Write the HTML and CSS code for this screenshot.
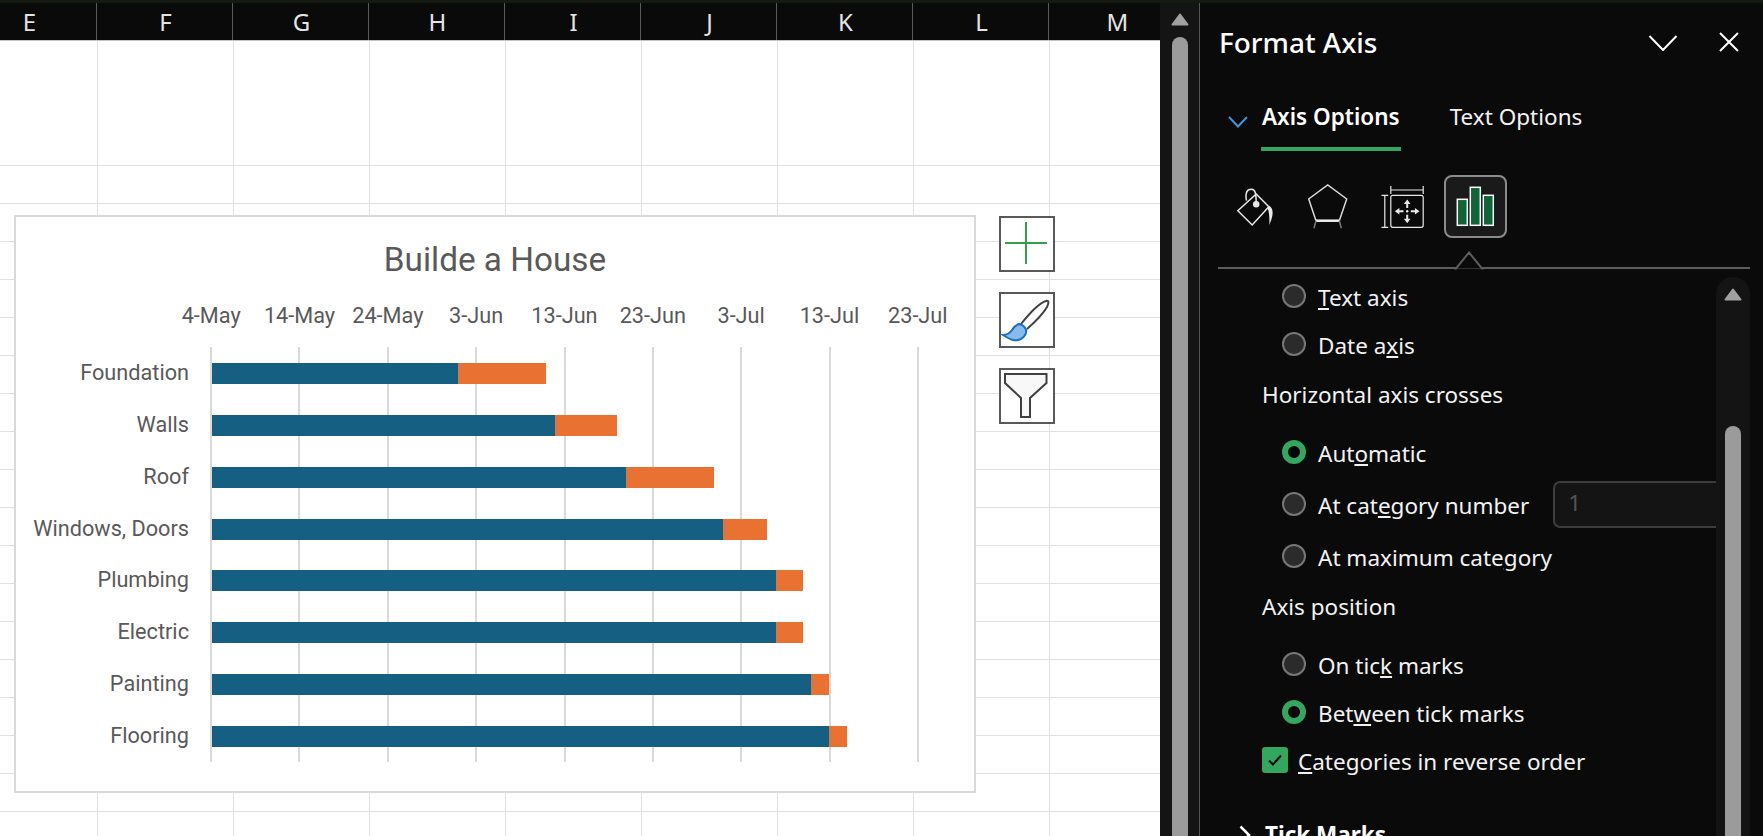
FILE: index.html
```html
<!DOCTYPE html>
<html lang="en">
  <head>
    <meta charset="utf-8" />
    <title>Format Axis</title>
    <link rel="stylesheet" href="styles.css">
  </head>

  <body>
    <div class="top-strip"></div>

    <div class="app">
      <div class="sheet">
        <div class="col-header">
          <div class="col first-col">E</div>
          <div class="col">F</div>
          <div class="col">G</div>
          <div class="col">H</div>
          <div class="col">I</div>
          <div class="col">J</div>
          <div class="col">K</div>
          <div class="col">L</div>
          <div class="col">M</div>
        </div>

        <div class="cells">
          <div class="row tall-row"></div>
          <div class="row"></div><div class="row"></div><div class="row"></div><div class="row"></div>
          <div class="row"></div><div class="row"></div><div class="row"></div><div class="row"></div>
          <div class="row"></div><div class="row"></div><div class="row"></div><div class="row"></div>
          <div class="row"></div><div class="row"></div><div class="row"></div><div class="row"></div>
          <div class="row"></div>

          <div class="chart">
            <div class="chart-title">Builde a House</div>
            <div class="chart-axis">
              <span>4-May</span><span>14-May</span><span>24-May</span><span>3-Jun</span><span>13-Jun</span>
              <span>23-Jun</span><span>3-Jul</span><span>13-Jul</span><span>23-Jul</span>
            </div>
            <div class="plot">
              <div class="gridlines">
                <i></i><i></i><i></i><i></i><i></i><i></i><i></i><i></i><i></i>
              </div>
              <div class="task"><label>Foundation</label><span class="bar-start" style="width: 246px"></span><span class="bar-days" style="width: 88px"></span></div>
              <div class="task"><label>Walls</label><span class="bar-start" style="width: 343px"></span><span class="bar-days" style="width: 62px"></span></div>
              <div class="task"><label>Roof</label><span class="bar-start" style="width: 414px"></span><span class="bar-days" style="width: 88px"></span></div>
              <div class="task"><label>Windows, Doors</label><span class="bar-start" style="width: 511px"></span><span class="bar-days" style="width: 44px"></span></div>
              <div class="task"><label>Plumbing</label><span class="bar-start" style="width: 564px"></span><span class="bar-days" style="width: 27px"></span></div>
              <div class="task"><label>Electric</label><span class="bar-start" style="width: 564px"></span><span class="bar-days" style="width: 27px"></span></div>
              <div class="task"><label>Painting</label><span class="bar-start" style="width: 599px"></span><span class="bar-days" style="width: 18px"></span></div>
              <div class="task"><label>Flooring</label><span class="bar-start" style="width: 617px"></span><span class="bar-days" style="width: 18px"></span></div>
            </div>
          </div>

          <div class="chart-tools">
            <div class="chart-tool">
              <svg width="52" height="52" viewBox="0 0 52 52">
                <path d="M25 4V46M4 25H46" stroke="#339f50" stroke-width="2" fill="none" />
              </svg>
            </div>
            <div class="chart-tool">
              <svg width="52" height="52" viewBox="2 2 52 52">
                <path d="M22 32C30 22 40 11 47 9C50 8 50 11 48 15C44 22 36 30 28 37" fill="#fff" stroke="#404040" stroke-width="2" />
                <path d="M20 32C25 33 28 37 27 41C25 47 19 49 14 48C10 47 7 45 4 43C8 43 11 41 13 38C15 35 17 33 20 32Z" fill="#86bbec" stroke="#1b6ec2" stroke-width="2" />
              </svg>
            </div>
            <div class="chart-tool">
              <svg width="52" height="52" viewBox="2 2 52 52">
                <path d="M6 6H47.5V15L31 30V49H22V30L6 15Z" fill="#f8f8f8" stroke="#404040" stroke-width="2" />
              </svg>
            </div>
          </div>
        </div>
      </div>

      <div class="sheet-scroll">
        <svg class="scroll-up" width="18" height="13" viewBox="0 0 18 13">
          <path d="M9 1.500L16.500 11.500H1.500Z" fill="#a0a0a0" stroke="#a0a0a0" stroke-width="2" stroke-linejoin="round" />
        </svg>
        <div class="scroll-thumb"></div>
      </div>

      <div class="panel">
        <div class="panel-head">
          <h1>Format Axis</h1>
          <svg class="head-chevron" width="30" height="16" viewBox="0 0 30 16">
            <path d="M1.500 1L15 15L28.500 1" stroke="#fff" stroke-width="2" fill="none" />
          </svg>
          <svg class="head-close" width="22" height="22" viewBox="0 0 22 22">
            <path d="M2 2L20 20M20 2L2 20" stroke="#fff" stroke-width="2" fill="none" />
          </svg>
        </div>

        <div class="tabs">
          <svg class="tab-chevron" width="20" height="12" viewBox="0 0 20 12">
            <path d="M1 1L10 10.500L19 1" stroke="#3a96dd" stroke-width="2" fill="none" />
          </svg>
          <div class="tab tab-active">Axis Options</div>
          <div class="tab">Text Options</div>
        </div>

        <div class="icon-tabs">
          <div class="icon-tab">
            <svg width="63" height="63" viewBox="0 0 63 63" fill="none" stroke="#e8e8e8" stroke-width="1.500">
              <path d="M13.800 35.700L28.200 50L44.800 31.700L32.200 19Z" />
              <path d="M22.500 25.700C21 18 23 14.300 27.200 14.300C31 14.300 32.200 17 32.200 29.300" />
              <circle cx="32.200" cy="29.300" r="2.500" fill="#e8e8e8" />
              <path d="M44.800 30.500C49 33 50.500 38 45.300 50C45.500 43 45.500 38 43.500 33Z" fill="#e8e8e8" stroke="none" />
            </svg>
          </div>
          <div class="icon-tab">
            <svg width="63" height="63" viewBox="0 0 63 63" fill="none" stroke="#d8d8d8" stroke-width="1.500">
              <path d="M19 45.700L11.700 24L30.700 10L49.700 24L42.300 45.700" />
              <path d="M19 45.700H42.300" stroke="#f0f0f0" stroke-width="2.500" />
              <path d="M19 45.700L17 53.300M42.300 45.700L44.300 53.300" stroke="#777" />
            </svg>
          </div>
          <div class="icon-tab">
            <svg width="63" height="63" viewBox="0 0 63 63" fill="none" stroke="#e8e8e8" stroke-width="1.200">
              <rect x="19.800" y="20.300" width="32.400" height="32" rx="2" />
              <path d="M19.800 11V19M52.200 11V19M19.800 15H52.200" />
              <path d="M13.800 20.300V52.300M10.500 20.300H17.200M10.500 52.300H17.200" />
              <path d="M36.200 24.500L39.500 29H37.200V33H35.200V29H32.900ZM36.200 48.300L39.500 43.700H37.200V39.700H35.200V43.700H32.900ZM23.800 36.300L28.400 33V35.300H32.500V37.300H28.400V39.600ZM48.500 36.300L43.900 33V35.300H39.800V37.300H43.900V39.600Z" fill="#e8e8e8" stroke="none" />
              <circle cx="36.200" cy="36.300" r="1.200" fill="#e8e8e8" stroke="none" />
            </svg>
          </div>
          <div class="icon-tab icon-tab-active">
            <svg width="59" height="59" viewBox="2 2 59 59" fill="#0e6537" stroke="#fff" stroke-width="1.500">
              <rect x="13.300" y="24.300" width="10" height="26" />
              <rect x="26.300" y="12.300" width="10" height="38" />
              <rect x="39.300" y="20.300" width="10" height="30" />
            </svg>
          </div>
        </div>

        <div class="divider">
          <svg class="divider-notch" width="30" height="19" viewBox="0 0 30 19">
            <path d="M0 17.500H2L15 1.500L28 17.500H30" stroke="#5c5c5c" stroke-width="2" fill="#0a0a0a" />
          </svg>
        </div>

        <div class="panel-body">
          <div class="options">
            <div class="option"><span class="radio"></span><span><u>T</u>ext axis</span></div>
            <div class="option"><span class="radio"></span><span>Date a<u>x</u>is</span></div>
            <div class="section-label first-label">Horizontal axis crosses</div>
            <div class="option option-wide first-wide"><span class="radio radio-on"></span><span>Aut<u>o</u>matic</span></div>
            <div class="option option-wide">
              <span class="radio"></span><span>At cat<u>e</u>gory number</span>
              <div class="number-input">1</div>
            </div>
            <div class="option option-wide"><span class="radio"></span><span>At maximum cate<u>g</u>ory</span></div>
            <div class="section-label second-label">Axis position</div>
            <div class="option first-tick"><span class="radio"></span><span>On tic<u>k</u> marks</span></div>
            <div class="option"><span class="radio radio-on"></span><span>Bet<u>w</u>een tick marks</span></div>
            <div class="check-row">
              <span class="checkbox">
                <svg width="16" height="14" viewBox="0 0 16 14">
                  <path d="M2 7.500L6 11.500L14 2.500" stroke="#050505" stroke-width="2" fill="none" />
                </svg>
              </span>
              <span><u>C</u>ategories in reverse order</span>
            </div>
            <div class="group-head">
              <svg width="12" height="20" viewBox="0 0 12 20">
                <path d="M1.500 1.500L10 10L1.500 18.500" stroke="#fff" stroke-width="2.500" fill="none" />
              </svg>
              <span>Tick Marks</span>
            </div>
          </div>

          <div class="panel-scroll">
            <svg class="scroll-up" width="18" height="13" viewBox="0 0 18 13">
              <path d="M9 1.500L16.500 11.500H1.500Z" fill="#a0a0a0" stroke="#a0a0a0" stroke-width="2" stroke-linejoin="round" />
            </svg>
            <div class="scroll-thumb"></div>
          </div>
        </div>
      </div>
    </div>
  </body>
</html>
```

FILE: styles.css
```css
* {
  box-sizing: border-box;
}

html,
body {
  margin: 0;
  height: 100%;
  overflow: hidden;
  background-color: #0a0a0a;
}

.top-strip {
  height: 3px;
  background-color: #141a10;
}

.app {
  display: flex;
  height: 833px;
}

/* sheet */

.sheet {
  width: 1160px;
  flex: none;
  overflow: hidden;
  display: flex;
  flex-direction: column;
}

.col-header {
  display: flex;
  height: 38px;
  flex: none;
  background-color: #0a0a0a;
  border-bottom: 1px solid #c4c4c4;
}

.col {
  width: 136px;
  flex: none;
  padding-left: 2px;
  border-right: 1px solid #5a5a5a;
  color: #e4e4e4;
  font-family: "Noto Sans", sans-serif;
  font-size: 24px;
  line-height: 37px;
  text-align: center;
}

.first-col {
  margin-left: -39px;
}

.cells {
  position: relative;
  flex: 1;
  background-color: #fff;
  background-image: repeating-linear-gradient(
    to right,
    transparent 0,
    transparent 97px,
    #e0e0e0 97px,
    #e0e0e0 98px,
    transparent 98px,
    transparent 136px
  );
}

.row {
  height: 38px;
  border-bottom: 1px solid #e0e0e0;
}

.tall-row {
  height: 125px;
}

/* chart */

.chart {
  position: absolute;
  left: 14px;
  top: 174px;
  width: 962px;
  height: 578px;
  display: flex;
  flex-direction: column;
  background-color: #fff;
  border: 2px solid #d9d9d9;
  color: #595959;
  font-family: Roboto, sans-serif;
}

.chart-title {
  height: 83px;
  font-size: 33.300px;
  line-height: 85px;
  text-align: center;
}

.chart-axis {
  display: flex;
  height: 30px;
  margin-left: 151px;
  font-size: 21.700px;
  line-height: 32px;
}

.chart-axis span {
  width: 88.33px;
  flex: none;
  text-align: center;
}

.plot {
  position: relative;
  margin-top: 17px;
  padding-top: 0.5px;
}

.gridlines {
  position: absolute;
  left: 194px;
  top: 0;
  bottom: 0;
  width: 709px;
  display: flex;
  justify-content: space-between;
}

.gridlines i {
  width: 2px;
  background-color: #d9d9d9;
}

.task {
  position: relative;
  display: flex;
  align-items: center;
  height: 51.860px;
}

.task label {
  width: 196px;
  flex: none;
  padding: 0 23px 2px 0;
  font-size: 21.700px;
  text-align: right;
}

.bar-start,
.bar-days {
  height: 21px;
}

.bar-start {
  background-color: #156082;
}

.bar-days {
  background-color: #e97132;
}

.chart-tools {
  position: absolute;
  left: 999px;
  top: 175px;
  display: flex;
  flex-direction: column;
  gap: 20px;
}

.chart-tool {
  width: 56px;
  height: 56px;
  background-color: #fff;
  border: 2px solid #595959;
}

.chart-tool svg {
  display: block;
}

/* scroll bars */

.sheet-scroll {
  width: 40px;
  flex: none;
  background-color: #141414;
  border-right: 1px solid #555;
}

.sheet-scroll .scroll-up {
  margin: 10px 0 0 11px;
}

.sheet-scroll .scroll-thumb {
  margin: 11px 0 0 12px;
}

.scroll-up {
  display: block;
}

.scroll-thumb {
  width: 16px;
  height: 900px;
  background-color: #9b9b9b;
  border-radius: 8px 8px 0 0;
}

/* format pane */

.panel {
  flex: 1;
  min-width: 0;
  overflow: hidden;
  display: flex;
  flex-direction: column;
  background-color: #0a0a0a;
  color: #f2f2f2;
  font-family: "Noto Sans", sans-serif;
  font-size: 22.500px;
}

.panel-head {
  display: flex;
  align-items: center;
  height: 78px;
  flex: none;
  padding: 0 0 0 19px;
}

.panel-head h1 {
  flex: 1;
  margin: 0;
  color: #fff;
  font-size: 27.900px;
  font-weight: 500;
}

.head-chevron {
  margin-right: 40px;
  margin-top: 1px;
}

.head-close {
  margin-right: 23px;
}

.tabs {
  display: flex;
  align-items: flex-start;
  height: 70px;
  flex: none;
}

.tab-chevron {
  margin: 35px 13px 0 28px;
}

.tab {
  height: 70px;
  padding: 18px 1px 0;
  margin-right: 48px;
  line-height: 36px;
}

.tab-active {
  color: #fff;
  font-weight: 600;
  border-bottom: 4px solid #33a65f;
}

.icon-tabs {
  display: flex;
  gap: 10.5px;
  height: 63px;
  margin-top: 24px;
  padding-left: 23.5px;
  flex: none;
}

.icon-tab {
  width: 63px;
  height: 63px;
}

.icon-tab svg {
  display: block;
}

.icon-tab-active {
  background-color: #1a1a1a;
  border: 2px solid #8c8c8c;
  border-radius: 8px;
}

.divider {
  position: relative;
  height: 2px;
  flex: none;
  margin: 29px 13px 0 18px;
  background-color: #5c5c5c;
}

.divider-notch {
  position: absolute;
  left: 236px;
  top: -16.500px;
}

.panel-body {
  display: flex;
  flex: 1;
  min-height: 0;
  padding: 3px 13px 0 0;
}

.options {
  flex: 1;
  min-width: 0;
  overflow: hidden;
  padding-left: 62px;
  line-height: 30px;
}

.option {
  display: flex;
  align-items: center;
  height: 48px;
  padding-left: 20px;
}

.option > span + span,
.check-row > span + span {
  padding-top: 4px;
}

.option-wide {
  height: 52px;
}

.first-wide {
  margin-top: 7px;
}

.first-tick {
  margin-top: 9px;
}

.radio {
  width: 24px;
  height: 24px;
  flex: none;
  margin-right: 12px;
  background-color: #2b2b2b;
  border: 2px solid #777;
  border-radius: 50%;
}

.radio-on {
  background-color: #050505;
  border: 6px solid #33a65f;
}

.section-label {
  display: flex;
  align-items: center;
  height: 48px;
}

.first-label {
  margin-top: 3px;
  margin-bottom: 1px;
}

.second-label {
  margin-top: 1px;
}

.number-input {
  flex: 1;
  height: 47px;
  margin: 0 0 0 24px;
  padding-left: 13px;
  background-color: #141414;
  border: 2px solid #3d3d3d;
  border-right: 0;
  border-radius: 7px 0 0 7px;
  color: #555;
  line-height: 40px;
}

.check-row {
  display: flex;
  align-items: center;
  height: 48px;
}

.checkbox {
  display: flex;
  align-items: center;
  justify-content: center;
  width: 26px;
  height: 26px;
  flex: none;
  margin-right: 10px;
  background-color: #33a65f;
  border-radius: 3px;
}

.group-head {
  display: flex;
  align-items: center;
  gap: 14px;
  margin: 36px 0 0 -23px;
  color: #fff;
  font-weight: 700;
}

.panel-scroll {
  width: 34px;
  flex: none;
  margin-top: 5px;
  overflow: hidden;
  background-color: #141414;
  border-radius: 17px 17px 0 0;
}

.panel-scroll .scroll-up {
  margin: 11px 0 0 8px;
}

.panel-scroll .scroll-thumb {
  margin: 125px 0 0 9px;
}
```
